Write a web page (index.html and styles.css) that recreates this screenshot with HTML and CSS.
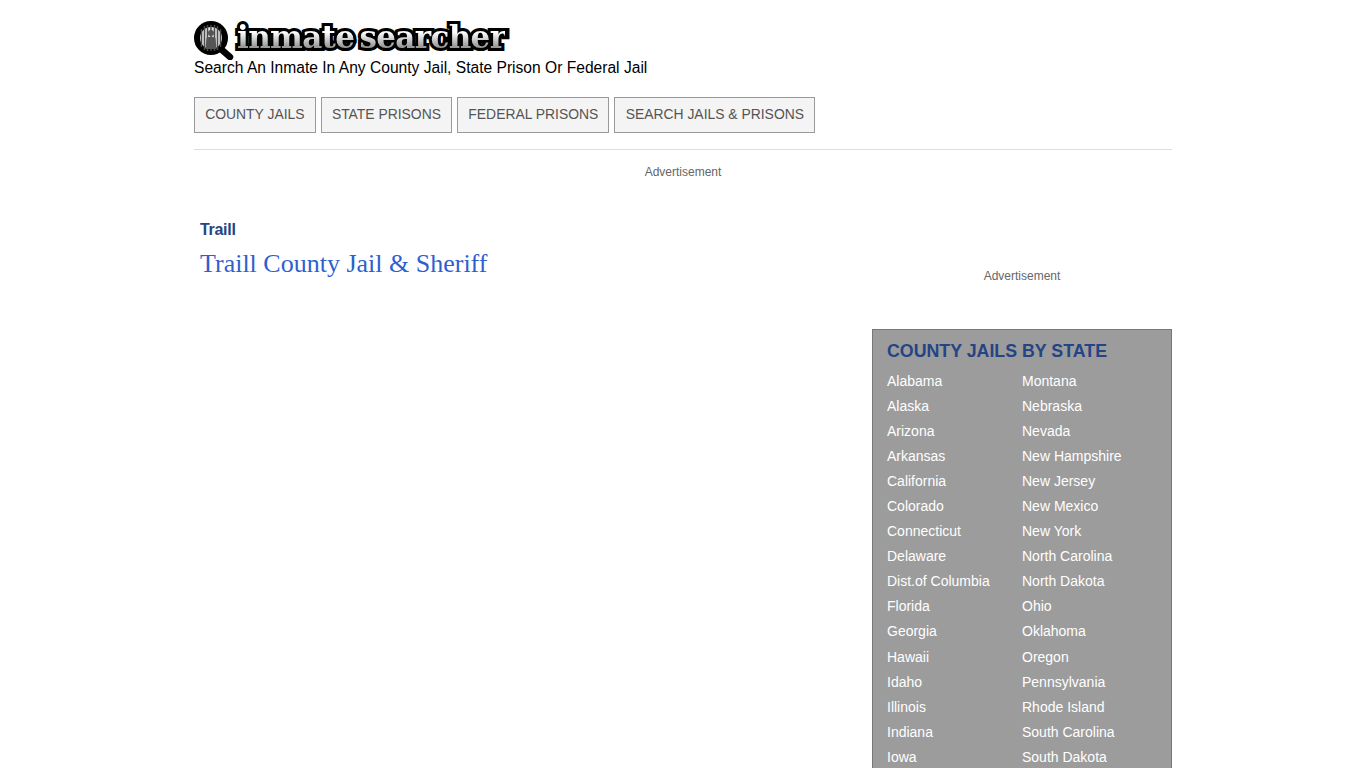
FILE: index.html
```html
<!DOCTYPE html>
<html lang="en">
<head>
<meta charset="UTF-8">
<meta name="viewport" content="width=device-width, initial-scale=1.0">
<title>Traill County Jail &amp; Sheriff</title>
<link rel="stylesheet" href="styles.css">
</head>
<body>

<div class="container">
    <header class="site-header">
        <a class="logo" href="#">
            <svg class="logo-icon" width="40" height="40" viewBox="0 0 40 40" aria-hidden="true">
                <line x1="28" y1="30" x2="36" y2="37" stroke="#000" stroke-width="6.5" stroke-linecap="round"/>
                <circle cx="17" cy="18" r="14" fill="#e4e4e4" stroke="#000" stroke-width="6"/>
                <g stroke="#4a4a4a" stroke-width="1.5">
                    <line x1="7.5" y1="9" x2="7.5" y2="27"/>
                    <line x1="10.5" y1="6" x2="10.5" y2="30"/>
                    <line x1="13.5" y1="5" x2="13.5" y2="31"/>
                    <line x1="17" y1="5" x2="17" y2="31"/>
                    <line x1="20.5" y1="5" x2="20.5" y2="31"/>
                    <line x1="23.5" y1="6" x2="23.5" y2="30"/>
                    <line x1="26.5" y1="9" x2="26.5" y2="27"/>
                </g>
                <circle cx="17" cy="13" r="3" fill="#555"/>
                <path d="M11.5 29 L12.5 18 Q17 15 21.5 18 L22.5 29 Z" fill="#555"/>
            </svg>
            <span class="logo-text" data-text="inmate searcher">inmate searcher</span>
        </a>
        <p class="tagline">Search An Inmate In Any County Jail, State Prison Or Federal Jail</p>
    </header>

    <nav class="main-nav">
        <a href="#">COUNTY JAILS</a>
        <a href="#">STATE PRISONS</a>
        <a href="#">FEDERAL PRISONS</a>
        <a href="#">SEARCH JAILS &amp; PRISONS</a>
    </nav>

    <div class="ad-label top-ad">Advertisement</div>

    <div class="columns">
        <main class="content">
            <h3 class="county">Traill</h3>
            <h2 class="jail-title"><a href="#">Traill County Jail &amp; Sheriff</a></h2>
        </main>

        <aside class="sidebar">
            <div class="ad-label side-ad">Advertisement</div>
            <div class="state-box">
                <h4>COUNTY JAILS BY STATE</h4>
                <ul class="state-list">
                    <li><a href="#">Alabama</a></li>
                    <li><a href="#">Montana</a></li>
                    <li><a href="#">Alaska</a></li>
                    <li><a href="#">Nebraska</a></li>
                    <li><a href="#">Arizona</a></li>
                    <li><a href="#">Nevada</a></li>
                    <li><a href="#">Arkansas</a></li>
                    <li><a href="#">New Hampshire</a></li>
                    <li><a href="#">California</a></li>
                    <li><a href="#">New Jersey</a></li>
                    <li><a href="#">Colorado</a></li>
                    <li><a href="#">New Mexico</a></li>
                    <li><a href="#">Connecticut</a></li>
                    <li><a href="#">New York</a></li>
                    <li><a href="#">Delaware</a></li>
                    <li><a href="#">North Carolina</a></li>
                    <li><a href="#">Dist.of Columbia</a></li>
                    <li><a href="#">North Dakota</a></li>
                    <li><a href="#">Florida</a></li>
                    <li><a href="#">Ohio</a></li>
                    <li><a href="#">Georgia</a></li>
                    <li><a href="#">Oklahoma</a></li>
                    <li><a href="#">Hawaii</a></li>
                    <li><a href="#">Oregon</a></li>
                    <li><a href="#">Idaho</a></li>
                    <li><a href="#">Pennsylvania</a></li>
                    <li><a href="#">Illinois</a></li>
                    <li><a href="#">Rhode Island</a></li>
                    <li><a href="#">Indiana</a></li>
                    <li><a href="#">South Carolina</a></li>
                    <li><a href="#">Iowa</a></li>
                    <li><a href="#">South Dakota</a></li>
                    <li><a href="#">Kansas</a></li>
                    <li><a href="#">Tennessee</a></li>
                </ul>
            </div>
        </aside>
    </div>
</div>

</body>
</html>
```

FILE: styles.css
```css
body {
    font-family: "Liberation Sans", Arial, sans-serif;
    background-color: #fff;
    margin: 0;
    color: #000;
}
a {
    text-decoration: none;
}
.container {
    width: 978px;
    margin: 0 auto;
}
.site-header {
    padding-top: 20px;
}
.logo {
    display: flex;
    align-items: flex-start;
    height: 39px;
}
.logo-icon {
    flex: none;
}
.logo-text {
    position: relative;
    font-family: "DejaVu Serif", serif;
    font-weight: bold;
    font-size: 31px;
    line-height: 32px;
    letter-spacing: -0.65px;
    word-spacing: -5px;
    color: #000;
    -webkit-text-stroke: 6px #000;
    margin: 1px 0 0 3px;
}
/* gradient letters sit on top of the black outline */
.logo-text::after {
    content: attr(data-text);
    position: absolute;
    left: 0;
    top: 0;
    color: transparent;
    -webkit-text-stroke: 0;
    background: linear-gradient(#fff 35%, #999 80%);
    -webkit-background-clip: text;
    background-clip: text;
}
.tagline {
    margin: 0;
    font-size: 15.6px;
    line-height: 18px;
}
.main-nav {
    display: flex;
    gap: 5px;
    margin-top: 20px;
    padding-bottom: 16px;
    border-bottom: 1px solid #ddd;
}
.main-nav a {
    display: block;
    padding: 0 10.2px 2px;
    line-height: 32px;
    font-size: 13.9px;
    color: #555;
    background-color: #f4f4f4;
    border: 1px solid #999;
}
.ad-label {
    font-size: 12px;
    line-height: 14px;
    color: #666;
    text-align: center;
}
.top-ad {
    margin-top: 15px;
}
.columns {
    display: flex;
    justify-content: space-between;
}
.content {
    padding: 41px 0 0 6px;
}
.county {
    margin: 0;
    font-size: 16px;
    line-height: 20px;
    letter-spacing: -0.3px;
    color: #254484;
}
.jail-title {
    margin: 9px 0 0;
    font-family: "Liberation Serif", serif;
    font-weight: normal;
    font-size: 26px;
    line-height: 30px;
}
.jail-title a {
    color: #2f5fcf;
}
.sidebar {
    width: 300px;
}
.side-ad {
    margin-top: 90px;
}
.state-box {
    margin-top: 46px;
    padding: 12px 14px 0;
    background-color: #9c9c9c;
    border: 1px solid #777;
}
.state-box h4 {
    margin: 0 0 9px;
    font-size: 17.8px;
    line-height: 18px;
    color: #254484;
}
.state-list {
    list-style: none;
    margin: 0;
    padding: 0;
    display: grid;
    grid-template-columns: 135px 1fr;
}
.state-list li {
    font-size: 14px;
    line-height: 25.05px;
}
.state-list a {
    color: #fff;
}
```
